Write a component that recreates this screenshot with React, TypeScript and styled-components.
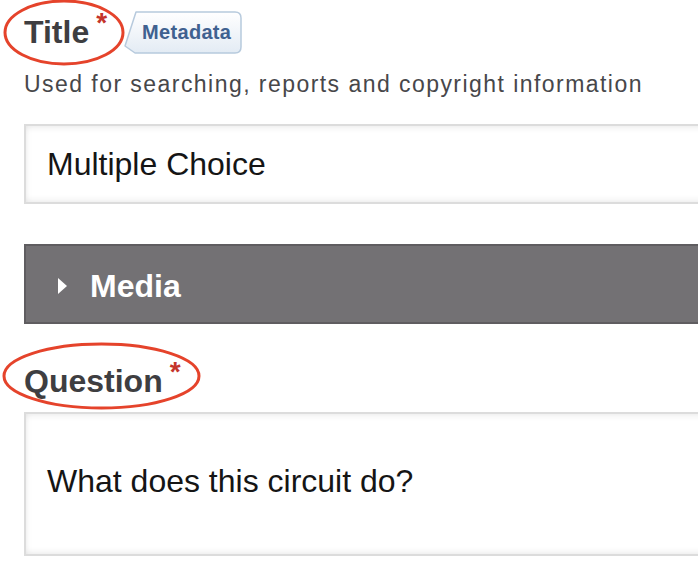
import React from 'react';
import styled, { createGlobalStyle } from 'styled-components';

const GlobalStyle = createGlobalStyle`
    html, body {
        margin: 0;
        padding: 0;
        background: #ffffff;
        overflow: hidden;
    }
    body {
        font-family: 'Liberation Sans', Arial, Helvetica, sans-serif;
    }
`;

const Page = styled.div`
    display: flex;
    flex-direction: column;
    padding: 10px 0 0 24px;
    width: 760px;
`;

const LabelRow = styled.div`
    display: flex;
    align-items: center;
    gap: 16px;
`;

const LabelWrap = styled.div`
    position: relative;
    display: inline-flex;
    align-items: flex-start;
`;

const Label = styled.span`
    font-size: 32px;
    font-weight: 700;
    line-height: 36px;
    color: #3e3e41;
`;

const Required = styled.span`
    font-size: 28px;
    font-weight: 700;
    line-height: 1;
    color: #c4342b;
    margin: -5px 0 0 7px;
`;

const Circle = styled.svg<{ $left: number; $top: number }>`
    position: absolute;
    left: ${p => p.$left}px;
    top: ${p => p.$top}px;
    overflow: visible;
    pointer-events: none;
`;

const Badge = styled.span`
    position: relative;
    isolation: isolate;
    display: inline-flex;
    align-items: center;
    width: 120px;
    height: 44px;
    padding-left: 19px;
    box-sizing: border-box;
    font-size: 20px;
    font-weight: 700;
    letter-spacing: 0.3px;
    color: #3f6190;

    & svg {
        position: absolute;
        left: 0;
        top: 0;
        z-index: -1;
    }
`;

const Description = styled.div`
    margin-top: 16px;
    font-size: 23px;
    line-height: 28px;
    letter-spacing: 1.45px;
    color: #47474a;
    white-space: nowrap;
`;

const TextBox = styled.div<{ $height: number; $padTop: number }>`
    box-sizing: border-box;
    height: ${p => p.$height}px;
    padding: ${p => p.$padTop}px 21px 0 21px;
    border: 2px solid #dcdcdc;
    background: #ffffff;
    box-shadow: inset 0 5px 6px -3px rgba(0, 0, 0, 0.07),
        inset 0 -5px 6px -3px rgba(0, 0, 0, 0.07),
        inset 5px 0 6px -4px rgba(0, 0, 0, 0.05);
    font-size: 32px;
    line-height: 36px;
    color: #151515;
    white-space: nowrap;
`;

const MediaBar = styled.div`
    box-sizing: border-box;
    display: flex;
    align-items: center;
    gap: 23px;
    height: 80px;
    margin-top: 40px;
    padding: 4px 0 0 32px;
    background: #737174;
    border: 2px solid #5f5d60;
    border-right: none;
`;

const Caret = styled.span`
    width: 0;
    height: 0;
    border-top: 8px solid transparent;
    border-bottom: 8px solid transparent;
    border-left: 9px solid #ffffff;
`;

const MediaTitle = styled.span`
    font-size: 32px;
    font-weight: 700;
    line-height: 36px;
    color: #ffffff;
`;

const Section = styled.div<{ $gap: number }>`
    display: flex;
    flex-direction: column;
    gap: ${p => p.$gap}px;
`;

const Ellipse: React.FC<{ w: number; h: number; left: number; top: number }> = ({ w, h, left, top }) => (
    <Circle $left={left} $top={top} width={w + 4} height={h + 4} viewBox={`0 0 ${w + 4} ${h + 4}`}>
        <ellipse cx={(w + 4) / 2} cy={(h + 4) / 2} rx={w / 2} ry={h / 2} fill="none" stroke="#e5432b" strokeWidth="3" />
    </Circle>
);

const MetadataTag: React.FC = () => (
    <Badge>
        <svg width="120" height="46" viewBox="0 0 120 46">
            <defs>
                <linearGradient id="tagFill" x1="0" y1="0" x2="0" y2="1">
                    <stop offset="0" stopColor="#ffffff" />
                    <stop offset="1" stopColor="#e3ebf4" />
                </linearGradient>
            </defs>
            <path
                d="M13 2 H112 Q118 2 118 8 V37 Q118 43 112 43 H12 L2 36 Z"
                fill="url(#tagFill)"
                stroke="#b7cadd"
                strokeWidth="1.5"
                strokeLinejoin="round"
            />
        </svg>
        Metadata
    </Badge>
);

const App: React.FC = () => {
    return (
        <>
            <GlobalStyle />
            <Page>
                <LabelRow>
                    <LabelWrap>
                        <Ellipse w={118} h={63} left={-21} top={-15} />
                        <Label>Title</Label>
                        <Required>*</Required>
                    </LabelWrap>
                    <MetadataTag />
                </LabelRow>
                <Description>Used for searching, reports and copyright information</Description>
                <Section $gap={0} style={{ marginTop: 26 }}>
                    <TextBox $height={80} $padTop={20}>Multiple Choice</TextBox>
                </Section>
                <MediaBar>
                    <Caret />
                    <MediaTitle>Media</MediaTitle>
                </MediaBar>
                <Section $gap={13} style={{ marginTop: 39 }}>
                    <LabelRow>
                        <LabelWrap>
                            <Ellipse w={195} h={64} left={-22} top={-21} />
                            <Label>Question</Label>
                            <Required>*</Required>
                        </LabelWrap>
                    </LabelRow>
                    <TextBox $height={144} $padTop={49}>What does this circuit do?</TextBox>
                </Section>
            </Page>
        </>
    );
};

export default App;
